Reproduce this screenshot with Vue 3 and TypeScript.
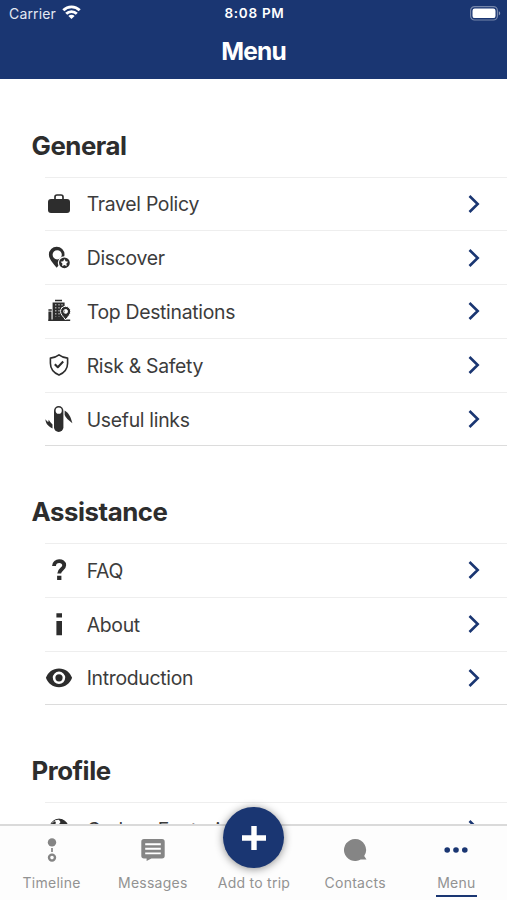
<script setup lang="ts">
interface MenuItem {
  label: string
  icon: string
}
interface MenuSection {
  title: string
  items: MenuItem[]
}

const sections: MenuSection[] = [
  {
    title: 'General',
    items: [
      { label: 'Travel Policy', icon: 'case' },
      { label: 'Discover', icon: 'discover' },
      { label: 'Top Destinations', icon: 'city' },
      { label: 'Risk & Safety', icon: 'shield' },
      { label: 'Useful links', icon: 'knife' },
    ],
  },
  {
    title: 'Assistance',
    items: [
      { label: 'FAQ', icon: 'question' },
      { label: 'About', icon: 'info' },
      { label: 'Introduction', icon: 'eye' },
    ],
  },
  {
    title: 'Profile',
    items: [{ label: 'Carbon Footprint', icon: 'globe' }],
  },
]

const tabs = ['Timeline', 'Messages', 'Add to trip', 'Contacts', 'Menu']
</script>

<template>
  <div class="screen">
    <header class="header">
      <div class="status">
        <div class="carrier">
          <span>Carrier</span>
          <svg class="wifi" width="19" height="14" viewBox="0 0 19 14" fill="none" stroke="#fff" stroke-width="2.8">
            <path d="M1.3 5.3a11.6 11.6 0 0 1 16.4 0" />
            <path d="M4.2 8.8a7.4 7.4 0 0 1 10.6 0" />
            <path d="M9.5 13.9 6.4 11a4.3 4.3 0 0 1 6.2 0z" fill="#fff" stroke="none" />
          </svg>
        </div>
        <span class="time">8:08 PM</span>
        <svg class="battery" width="31" height="15" viewBox="0 0 31 15">
          <rect x=".6" y=".6" width="26.8" height="13.4" rx="4" fill="none" stroke="#fff" stroke-opacity=".4" stroke-width="1.2" />
          <rect x="2.5" y="2.5" width="23" height="9.6" rx="2.2" fill="#fff" />
          <path d="M28.8 5.2c1.9.7 1.9 3.5 0 4.2z" fill="#fff" fill-opacity=".5" />
        </svg>
      </div>
      <h1>Menu</h1>
    </header>

    <main class="content">
      <section v-for="section in sections" :key="section.title">
        <h2>{{ section.title }}</h2>
        <ul>
          <li v-for="item in section.items" :key="item.label">
            <svg class="icon" viewBox="0 0 28 28" fill="#2d2d2d">
              <template v-if="item.icon === 'case'">
                <path d="M10 9V7q0-2 2-2h4q2 0 2 2v2" fill="none" stroke="#2d2d2d" stroke-width="1.7" />
                <rect x="3" y="9" width="22" height="14" rx="3" />
              </template>
              <template v-else-if="item.icon === 'discover'">
                <path fill-rule="evenodd" d="M11.7 2.8a7.8 7.8 0 0 0-7.8 7.8c0 4.4 3.8 8.4 7.8 13.2 4-4.8 7.8-8.8 7.8-13.2a7.8 7.8 0 0 0-7.8-7.8zm.5 3.4a4.6 4.6 0 1 1 0 9.2 4.6 4.6 0 0 1 0-9.2z" />
                <circle cx="19.4" cy="18.8" r="6.6" fill="#fff" />
                <circle cx="19.4" cy="18.8" r="5.4" />
                <path fill="#fff" d="m19.4 14.9 1.2 2.3 2.6.5-1.8 1.9.3 2.6-2.3-1.1-2.3 1.1.3-2.6-1.8-1.9 2.6-.5z" />
              </template>
              <template v-else-if="item.icon === 'city'">
                <path d="M10 2.7h7v1.5h-7zM7.6 5.5h12v17.7h-12z" />
                <path d="M3.4 12.2h3.4v1.5H3.4zM3.4 14.6h3.1v8.6H3.4zM3.2 22.6h22v1.4h-22z" />
                <path d="M10.8 7v12.5M14 7v12.5M17 7v5" fill="none" stroke="#fff" stroke-width=".8" stroke-dasharray="1.5 1.5" />
                <path fill-rule="evenodd" stroke="#fff" stroke-width="1" d="M20.6 9.3a5.1 5.1 0 0 0-5.1 5.1c0 2.8 2.4 5 5.1 8.4 2.7-3.4 5.1-5.6 5.1-8.4a5.1 5.1 0 0 0-5.1-5.1zm0 3.2a1.9 1.9 0 1 1 0 3.8 1.9 1.9 0 0 1 0-3.8z" />
              </template>
              <g v-else-if="item.icon === 'shield'" fill="none" stroke="#2d2d2d" stroke-width="1.6" stroke-linejoin="round">
                <path d="M14 3.8q3.8 2.9 8.6 3.3v5.1c0 5.3-3.3 9.5-8.6 11.9-5.3-2.4-8.6-6.6-8.6-11.9V7.1q4.8-.4 8.6-3.3z" />
                <path d="m9.8 13.2 3 3 5.4-5.7" stroke-width="2.1" />
              </g>
              <template v-else-if="item.icon === 'knife'">
                <rect x="9" y="1" width="9.4" height="26" rx="4.7" />
                <circle cx="13.7" cy="5.7" r="3.1" fill="#fff" />
                <path d="M19.6 5.5c4 2.2 6 6 7.8 12.8-3.7-2.8-7.2-5.8-7.8-8.5z" />
                <path d="M.4 14.2c.2 5.2 3.7 7.3 7.1 9.3v-4c-1.2-1.5-2.4-2.4-3.8-4.8l-.4 2.2C2 16.4 1.3 15.3.4 14.2z" />
              </template>
              <g v-else-if="item.icon === 'question'">
                <path d="M9 10C9.1 3.6 19.2 3.6 19.2 9.3c0 3.9-5 4.1-5 8.1" fill="none" stroke="#2d2d2d" stroke-width="3.9" />
                <path d="M12.1 19.7h4.3v4.2h-4.3z" />
              </g>
              <path v-else-if="item.icon === 'info'" d="M11.4 3.3h5.6v4.2h-5.6zM11.4 11h5.6v14.3h-5.6z" />
              <template v-else-if="item.icon === 'eye'">
                <path fill-rule="evenodd" d="M14 4.4C7.8 4.4 2.9 8.2.9 13.8c2 5.6 6.9 9.4 13.1 9.4s11.1-3.8 13.1-9.4C25.1 8.2 20.2 4.4 14 4.4zm0 3.2a6.2 6.2 0 1 1 0 12.4 6.2 6.2 0 0 1 0-12.4z" />
                <circle cx="14" cy="13.8" r="3.6" />
              </template>
              <template v-else>
                <circle cx="14" cy="13.4" r="9.3" fill="#fff" stroke="#2d2d2d" stroke-width="1" />
                <path d="M13.4 4.1c5-.3 9.6 3.7 10.1 8l-4-1-2 2-4-3 2-3zM5 10l5-4 1 2-4 5z" />
              </template>
            </svg>
            <span class="label">{{ item.label }}</span>
            <svg class="chevron" width="14" height="20" viewBox="0 0 14 20">
              <path d="m2.5 2 8.2 8-8.2 8" fill="none" stroke="#1a3672" stroke-width="2.6" />
            </svg>
          </li>
        </ul>
      </section>
    </main>

    <nav class="tabs">
      <div v-for="tab in tabs" :key="tab" class="tab" :class="{ active: tab === 'Menu' }">
        <div v-if="tab === 'Add to trip'" class="slot">
          <div class="add">
            <svg width="26" height="26" viewBox="0 0 26 26"><path d="M13 1v24M1 13h24" stroke="#fff" stroke-width="5.4" /></svg>
          </div>
        </div>
        <svg v-else class="slot" width="28" height="28" viewBox="0 0 28 28" fill="#858585">
          <template v-if="tab === 'Timeline'">
            <circle cx="14" cy="6.4" r="4.2" />
            <path d="M14 12v4" stroke="#858585" stroke-width="1.7" />
            <circle cx="14" cy="21.6" r="3" fill="none" stroke="#858585" stroke-width="2.4" />
          </template>
          <template v-else-if="tab === 'Messages'">
            <path d="M5 3h18q2.7 0 2.7 2.7v14q0 2.7-2.7 2.7H12.4L7.6 25v-2.6H5q-2.7 0-2.7-2.7v-14Q2.3 3 5 3z" />
            <path d="M6.2 8.2h15.6M6.2 12.8h15.6M6.2 17.4h15.6" stroke="#fff" stroke-width="1.9" />
          </template>
          <path v-else-if="tab === 'Contacts'" d="M14 3a11 11 0 1 0 5.7 20.4l5.8.1-2.3-3.4A11 11 0 0 0 14 3z" />
          <g v-else fill="#1a3672">
            <circle cx="5.2" cy="14" r="2.8" /><circle cx="14" cy="14" r="2.8" /><circle cx="22.8" cy="14" r="2.8" />
          </g>
        </svg>
        <span class="tab-label">{{ tab }}</span>
      </div>
    </nav>
  </div>
</template>

<style>
body {
  margin: 0;
  overflow: hidden;
}
</style>

<style scoped>
.screen {
  display: flex;
  flex-direction: column;
  height: 900px;
  background: #fff;
  color: #2d2d2d;
  font-family: Inter, Roboto, sans-serif;
}
.header {
  box-sizing: border-box;
  flex: none;
  height: 79px;
  background: #1a3672;
  color: #fff;
}
.status {
  display: grid;
  grid-template-columns: 1fr auto 1fr;
  align-items: center;
  height: 27px;
  padding: 0 6px 0 9px;
  font-size: 14px;
  line-height: 27px;
}
.carrier {
  display: flex;
  align-items: center;
  gap: 6px;
  color: #e4e9f2;
  letter-spacing: 0.15px;
}
.wifi {
  margin-top: -3px;
}
.time {
  margin-left: -1px;
  font-size: 13.5px;
  font-weight: 600;
  letter-spacing: 0.7px;
}
.battery {
  justify-self: end;
}
h1 {
  margin: 0;
  font-size: 24.5px;
  font-weight: 700;
  line-height: 49px;
  letter-spacing: -0.8px;
  text-align: center;
}
.content {
  flex: 1;
  min-height: 0;
  overflow: hidden;
}
h2 {
  box-sizing: border-box;
  height: 97.5px;
  margin: 0;
  padding: 50px 0 0 31.5px;
  font-size: 25.8px;
  font-weight: 700;
  line-height: 34px;
  letter-spacing: -0.45px;
}
ul {
  margin: 0 0 -1px 45px;
  padding: 0;
  list-style: none;
  border-bottom: 1px solid #dcdcdc;
}
li {
  box-sizing: border-box;
  display: flex;
  align-items: center;
  height: 53.8px;
  padding-right: 26px;
  border-top: 1px solid #eeeeee;
  font-size: 19.4px;
}
.icon {
  width: 28px;
  height: 28px;
  margin-right: 14.2px;
  margin-left: -0.5px;
}
.label {
  padding-top: 1px;
  color: #3c3c3c;
  letter-spacing: -0.3px;
}
.chevron {
  margin-left: auto;
}
.tabs {
  position: relative;
  box-sizing: border-box;
  display: grid;
  grid-template-columns: repeat(5, 101.2px);
  flex: none;
  height: 76px;
  padding-left: 1px;
  border-top: 2px solid #dadada;
  background: #fdfdfd;
}
.tab {
  display: flex;
  flex-direction: column;
  align-items: center;
  color: #929292;
  font-size: 14px;
  letter-spacing: 0.25px;
}
.slot {
  width: 28px;
  height: 28px;
  margin-top: 10px;
}
.add {
  position: absolute;
  top: -19px;
  left: 223px;
  display: grid;
  place-items: center;
  width: 61px;
  height: 61px;
  border-radius: 50%;
  background: #1a3672;
  box-shadow: 0 1px 8px rgba(0, 0, 0, 0.45);
}
.tab-label {
  box-sizing: border-box;
  height: 33px;
  padding: 9px 1px 0;
  line-height: 20px;
}
.active .tab-label {
  border-bottom: 2.5px solid #1a3672;
}
</style>
